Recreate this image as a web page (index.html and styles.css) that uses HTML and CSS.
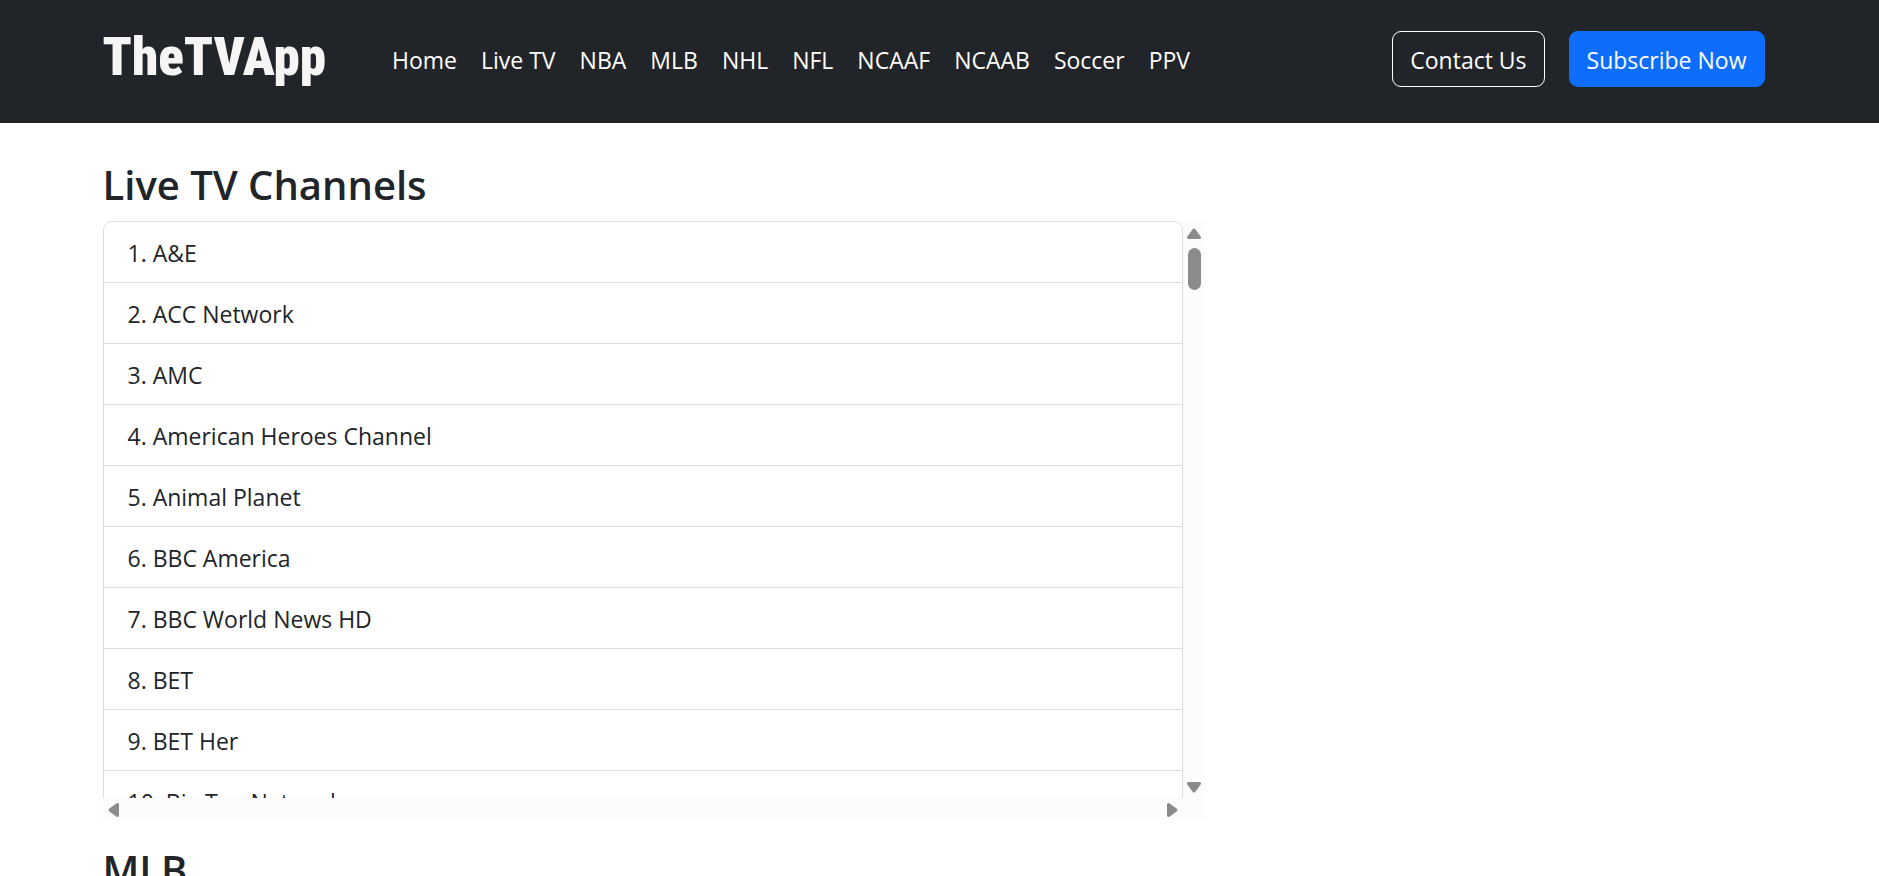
FILE: index.html
```html
<!DOCTYPE html>
<html lang="en">
<head>
<meta charset="utf-8">
<title>TheTVApp</title>
<link rel="stylesheet" href="styles.css">
</head>
<body>
<header class="site-header">
  <div class="container header-row">
    <a class="brand" href="#">TheTVApp</a>
    <nav class="nav" aria-label="Main">
      <a class="nav-link" href="#">Home</a>
      <a class="nav-link" href="#">Live TV</a>
      <a class="nav-link" href="#">NBA</a>
      <a class="nav-link" href="#">MLB</a>
      <a class="nav-link" href="#">NHL</a>
      <a class="nav-link" href="#">NFL</a>
      <a class="nav-link" href="#">NCAAF</a>
      <a class="nav-link" href="#">NCAAB</a>
      <a class="nav-link" href="#">Soccer</a>
      <a class="nav-link" href="#">PPV</a>
    </nav>
    <div class="actions">
      <button class="btn btn-outline" type="button">Contact Us</button>
      <button class="btn btn-primary" type="button">Subscribe Now</button>
    </div>
  </div>
</header>
<main class="container">
  <div class="column">
    <section class="section">
      <h3 class="heading">Live TV Channels</h3>
      <div class="scroll-box">
        <div class="viewport">
          <ol class="list">
            <li><a class="item" href="#">1. A&amp;E</a></li>
            <li><a class="item" href="#">2. ACC Network</a></li>
            <li><a class="item" href="#">3. AMC</a></li>
            <li><a class="item" href="#">4. American Heroes Channel</a></li>
            <li><a class="item" href="#">5. Animal Planet</a></li>
            <li><a class="item" href="#">6. BBC America</a></li>
            <li><a class="item" href="#">7. BBC World News HD</a></li>
            <li><a class="item" href="#">8. BET</a></li>
            <li><a class="item" href="#">9. BET Her</a></li>
            <li><a class="item" href="#">10. Big Ten Network</a></li>
          </ol>
        </div>
        <div class="bar bar-vertical">
          <svg class="arrow" viewBox="0 0 16 13"><path d="M8 3 13.500 10.500H2.500Z"/></svg>
          <span class="thumb"></span>
          <svg class="arrow arrow-end" viewBox="0 0 16 13"><path d="M8 10 13.500 2.500H2.500Z"/></svg>
        </div>
        <div class="bar bar-horizontal">
          <svg class="arrow-side" viewBox="0 0 13 16"><path d="M3 8 10.500 2.500V13.500Z"/></svg>
          <svg class="arrow-side" viewBox="0 0 13 16"><path d="M10 8 2.500 2.500V13.500Z"/></svg>
        </div>
        <div class="bar"></div>
      </div>
    </section>
    <section class="section">
      <h3 class="heading">MLB</h3>
    </section>
  </div>
</main>
</body>
</html>
```
FILE: styles.css
```css
* { box-sizing: border-box; }
html { height: 100%; overflow: hidden; }
body {
  margin: 0;
  height: 100%;
  overflow: hidden;
  background: #fff;
  color: #212529;
  font: 23px/36px "Segoe UI", "Open Sans", "Noto Sans", sans-serif;
}
a { color: inherit; text-decoration: none; }
.container { width: 100%; max-width: 1710px; margin: 0 auto; padding: 0 18px; }
.site-header { background: #212529; color: #fff; padding: 24px 0 29px; }
.header-row { display: flex; align-items: center; height: 70px; }
.brand {
  padding-bottom: 4px;
  color: #f5f5f5;
  font: 900 53px/66px "Roboto Condensed", Lato, sans-serif;
  white-space: nowrap;
}
.nav { display: flex; margin-left: 54px; padding-top: 2px; }
.nav-link { padding: 0 12px; }
.actions { display: flex; gap: 24px; margin: 0 12px 0 auto; }
.btn {
  height: 56px;
  padding: 2px 17px 0;
  border: 1px solid #fff;
  border-radius: 9px;
  background: transparent;
  color: #fff;
  font: inherit;
}
.btn-primary { background: #0d6efd; border-color: #0d6efd; }
.column { width: calc(66.6667% - 13px); padding-top: 37px; }
.section { margin-bottom: 24px; }
.heading { margin: 0 0 11px; font-size: 40px; line-height: 50px; font-weight: 600; }
.scroll-box {
  display: grid;
  grid-template-columns: 1fr 23px;
  grid-template-rows: 1fr 23px;
  height: 600px;
}
.viewport { overflow: hidden; min-height: 0; }
.list {
  margin: 0;
  padding: 0;
  list-style: none;
  border: 1px solid #dcdddf;
  border-radius: 9px;
}
.item { display: block; padding: 13px 24px 11px; border-bottom: 1px solid #dcdddf; }
.bar { background: #fcfcfc; display: flex; align-items: center; }
.bar-vertical { flex-direction: column; padding: 6px 0 4px; }
.bar-horizontal { justify-content: space-between; padding: 0 4px; }
.arrow { width: 16px; height: 13px; }
.arrow-side { width: 13px; height: 16px; }
.arrow-end { margin-top: auto; }
.arrow path, .arrow-side path { fill: #8b8b8b; stroke: #8b8b8b; stroke-width: 3; stroke-linejoin: round; }
.thumb { width: 13px; height: 42px; margin-top: 8px; border-radius: 7px; background: #8b8b8b; }
```
